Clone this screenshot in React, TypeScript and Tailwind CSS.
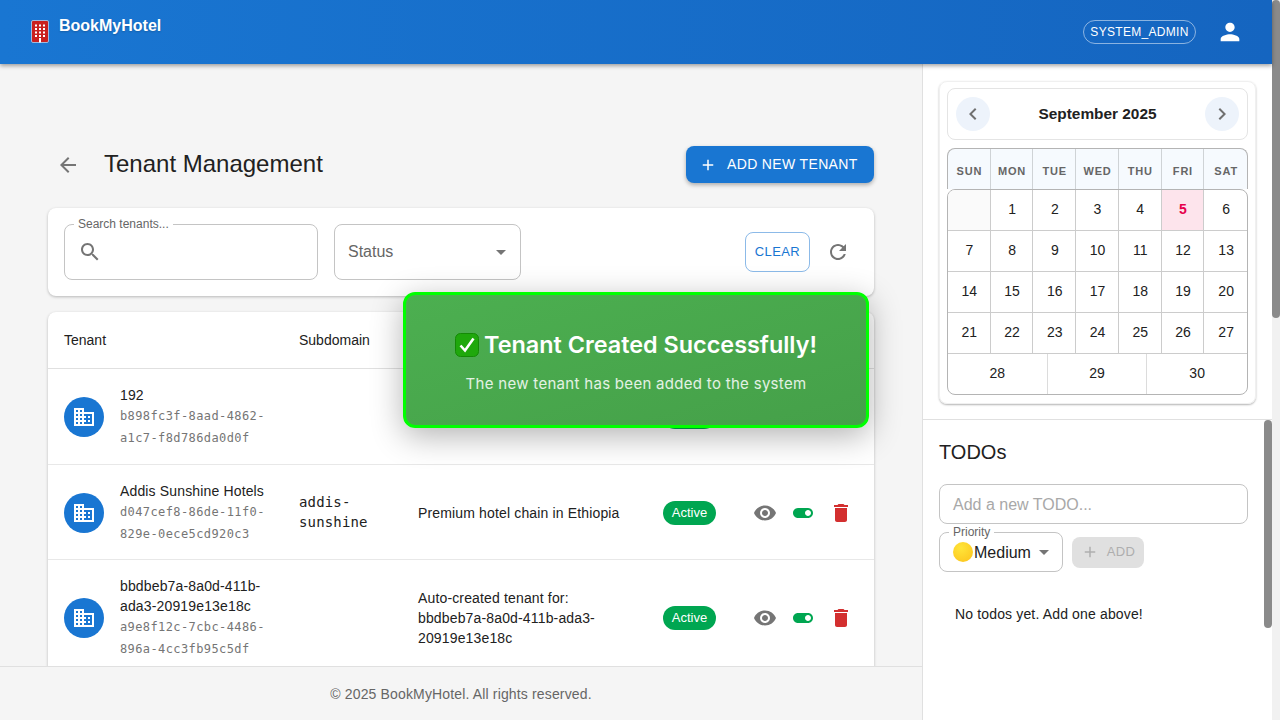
const paths = {
  person: 'M12 12c2.21 0 4-1.79 4-4s-1.79-4-4-4-4 1.79-4 4 1.79 4 4 4zm0 2c-2.67 0-8 1.34-8 4v2h16v-2c0-2.66-5.33-4-8-4z',
  back: 'M20 11H7.83l5.59-5.59L12 4l-8 8 8 8 1.41-1.41L7.83 13H20v-2z',
  add: 'M19 13h-6v6h-2v-6H5v-2h6V5h2v6h6v2z',
  search: 'M15.5 14h-.79l-.28-.27C15.41 12.59 16 11.11 16 9.5 16 5.91 13.09 3 9.5 3S3 5.91 3 9.5 5.91 16 9.5 16c1.61 0 3.09-.59 4.23-1.57l.27.28v.79l5 4.99L20.49 19l-4.99-5zm-6 0C7.01 14 5 11.99 5 9.5S7.01 5 9.5 5 14 7.01 14 9.5 11.99 14 9.5 14z',
  refresh: 'M17.65 6.35C16.2 4.9 14.21 4 12 4c-4.42 0-7.99 3.58-7.99 8s3.57 8 7.99 8c3.73 0 6.84-2.55 7.73-6h-2.08c-.82 2.33-3.04 4-5.65 4-3.31 0-6-2.69-6-6s2.69-6 6-6c1.66 0 3.14.69 4.22 1.78L13 11h7V4l-2.35 2.35z',
  eye: 'M12 4.5C7 4.5 2.73 7.61 1 12c1.73 4.39 6 7.5 11 7.5s9.27-3.11 11-7.5c-1.73-4.39-6-7.5-11-7.5zM12 17c-2.76 0-5-2.24-5-5s2.24-5 5-5 5 2.24 5 5-2.24 5-5 5zm0-8c-1.66 0-3 1.34-3 3s1.34 3 3 3 3-1.34 3-3-1.34-3-3-3z',
  toggle: 'M17 7H7c-2.76 0-5 2.24-5 5s2.24 5 5 5h10c2.76 0 5-2.24 5-5s-2.24-5-5-5zm0 8c-1.66 0-3-1.34-3-3s1.34-3 3-3 3 1.34 3 3-1.34 3-3 3z',
  trash: 'M6 19c0 1.1.9 2 2 2h8c1.1 0 2-.9 2-2V7H6v12zM19 4h-3.5l-1-1h-5l-1 1H5v2h14V4z',
  business: 'M12 7V3H2v18h20V7H12zM6 19H4v-2h2v2zm0-4H4v-2h2v2zm0-4H4V9h2v2zm0-4H4V5h2v2zm4 12H8v-2h2v2zm0-4H8v-2h2v2zm0-4H8V9h2v2zm0-4H8V5h2v2zm10 12h-8v-2h2v-2h-2v-2h2v-2h-2V9h8v10zm-2-8h-2v2h2v-2zm0 4h-2v2h2v-2z',
  left: 'M15.41 7.41 14 6l-6 6 6 6 1.41-1.41L10.83 12z',
  right: 'M10 6 8.59 7.41 13.17 12l-4.58 4.59L10 18l6-6z',
  drop: 'M7 10l5 5 5-5z',
};

function Icon({ name, className = '' }: { name: keyof typeof paths; className?: string }) {
  return (
    <svg viewBox="0 0 24 24" fill="currentColor" className={`shrink-0 ${className}`}>
      <path d={paths[name]} />
    </svg>
  );
}

const tenants = [
  {
    name: '192',
    id: 'b898fc3f-8aad-4862-a1c7-f8d786da0d0f',
    subdomain: '',
    description: '',
  },
  {
    name: 'Addis Sunshine Hotels',
    id: 'd047cef8-86de-11f0-829e-0ece5cd920c3',
    subdomain: 'addis-sunshine',
    description: 'Premium hotel chain in Ethiopia',
  },
  {
    name: 'bbdbeb7a-8a0d-411b-ada3-20919e13e18c',
    id: 'a9e8f12c-7cbc-4486-896a-4cc3fb95c5df',
    subdomain: '',
    description: 'Auto-created tenant for: bbdbeb7a-8a0d-411b-ada3-20919e13e18c',
  },
];

const weekdays = ['SUN', 'MON', 'TUE', 'WED', 'THU', 'FRI', 'SAT'];
const days = ['', ...Array.from({ length: 27 }, (_, i) => String(i + 1))];

function HotelLogo() {
  return (
    <svg viewBox="0 0 18 23" className="h-[23px] w-[18px] shrink-0">
      <rect x="0.5" y="0.5" width="17" height="22" rx="1.5" fill="#c9201f" stroke="#9fb9de" />
      {[4.5, 8, 11.5, 15].map((y) =>
        [4, 8, 12].map((x) => <rect key={`${x}-${y}`} x={x} y={y} width="2" height="2" fill="#fff" />),
      )}
      <rect x="8" y="18" width="2" height="4.5" fill="#fff" />
    </svg>
  );
}

function CheckEmoji() {
  return (
    <svg viewBox="0 0 24 24" className="h-6 w-6 shrink-0">
      <rect x="0.5" y="0.5" width="23" height="23" rx="5" fill="#1fa80c" stroke="#148a06" />
      <path d="M5.5 12.5l4.5 5 8.5-12" fill="none" stroke="#fff" strokeWidth="2.6" />
    </svg>
  );
}

function TenantRow({ tenant }: { tenant: (typeof tenants)[number] }) {
  return (
    <div className="grid grid-cols-[235px_119px_245px_91px_1fr] items-center border-b border-[#e8e8e8] pt-4 pb-[14.5px]">
      <div className="flex items-center gap-4 pl-4">
        <div className="flex h-10 w-10 shrink-0 items-center justify-center rounded-full bg-[#1976d2] text-white">
          <Icon name="business" className="h-6 w-6" />
        </div>
        <div className="w-[148px]">
          <div className="text-sm leading-5 tracking-[0.15px] text-[#212121]">{tenant.name}</div>
          <div className="font-['DejaVu_Sans_Mono',monospace] text-xs leading-[22px] tracking-[0.4px] text-[#757575]">
            {tenant.id}
          </div>
        </div>
      </div>
      <div className="px-4 pb-[2px] font-['DejaVu_Sans_Mono',monospace] text-sm leading-5 tracking-[0.15px] text-[#212121]">
        {tenant.subdomain}
      </div>
      <div className="px-4 text-sm leading-5 tracking-[0.15px] text-[#212121]">{tenant.description}</div>
      <div className="pl-4">
        <span className="flex h-6 w-[53px] items-center justify-center rounded-full bg-[#00a651] text-[13px] text-white">
          Active
        </span>
      </div>
      <div className="flex items-center gap-[14px] pl-[15px]">
        <Icon name="eye" className="h-6 w-6 text-[#757575]" />
        <Icon name="toggle" className="h-6 w-6 text-[#00a651]" />
        <Icon name="trash" className="h-6 w-6 text-[#d32f2f]" />
      </div>
    </div>
  );
}

function Calendar() {
  return (
    <div className="rounded-lg border border-[#f0f0f0] px-[7px] pt-[6px] pb-2 shadow-[0_1px_2px_rgba(0,0,0,0.3)]">
      <div className="flex h-[52px] items-center justify-between rounded-lg border border-[#e4e4e4] px-2">
        <div className="flex h-[34px] w-[34px] items-center justify-center rounded-full bg-[#edf3fb] text-[#707070]">
          <Icon name="left" className="h-6 w-6" />
        </div>
        <span className="text-[15.4px] font-bold text-[#212121]">September 2025</span>
        <div className="flex h-[34px] w-[34px] items-center justify-center rounded-full bg-[#edf3fb] text-[#707070]">
          <Icon name="right" className="h-6 w-6" />
        </div>
      </div>
      <div className="mt-2 w-[301px]">
        <div className="grid h-[41px] grid-cols-7 rounded-t-lg border-x border-t border-[#b4b4b4] bg-[#f6fafe]">
          {weekdays.map((d, i) => (
            <div
              key={d}
              className={`flex items-center justify-center pt-1 pl-px text-[11px] font-bold tracking-[0.8px] text-[#666] ${i < 6 ? 'border-r border-[#cfd3d6]' : ''}`}
            >
              {d}
            </div>
          ))}
        </div>
        <div className="overflow-hidden rounded-lg border border-[#b4b4b4]">
          <div className="grid grid-cols-7">
            {days.map((d, i) => (
              <div
                key={i}
                className={`flex h-[41px] items-center justify-center border-b border-[#cccccc] pb-[2px] pl-px text-sm ${i % 7 < 6 ? 'border-r' : ''} ${
                  d === '5' ? 'bg-[#fde4ec] font-bold text-[#e6004c]' : d === '' ? 'bg-[#fafafa]' : 'text-[#212121]'
                }`}
              >
                {d}
              </div>
            ))}
          </div>
          <div className="grid h-10 grid-cols-3">
            {['28', '29', '30'].map((d, i) => (
              <div
                key={d}
                className={`flex items-center justify-center border-[#dcdcdc] pb-[2px] text-sm text-[#212121] ${i < 2 ? 'border-r' : ''}`}
              >
                {d}
              </div>
            ))}
          </div>
        </div>
      </div>
    </div>
  );
}

function TodoPanel() {
  return (
    <div className="flex min-h-0 flex-1">
      <div className="w-[341px] pt-[19px] pl-4">
        <h2 className="text-xl leading-[26px] text-[#212121]">TODOs</h2>
        <div className="mt-[19px] flex h-10 w-[309px] items-center rounded-lg border border-[#c4c4c4] px-[13px] pt-[1px] text-base text-[#a8a8a8]">
          Add a new TODO...
        </div>
        <div className="mt-2 flex items-center gap-[9px]">
          <div className="relative flex h-10 w-[124px] items-center rounded-lg border border-[#c4c4c4] pl-[13px]">
            <span className="absolute -top-[8px] left-[9px] bg-white px-1 text-xs leading-[14px] text-[#666]">
              Priority
            </span>
            <span className="h-5 w-5 shrink-0 rounded-full bg-[radial-gradient(circle_at_40%_30%,#ffe53a,#fcc21b)]" />
            <span className="ml-[1px] pt-[1px] text-base text-[#212121]">Medium</span>
            <Icon name="drop" className="ml-[1px] h-6 w-6 text-[#757575]" />
          </div>
          <div className="flex h-[31px] w-[72px] items-center justify-center gap-2 rounded-lg bg-[#e0e0e0] text-[13px] tracking-[0.4px] text-[#aeaeae]">
            <Icon name="add" className="h-[18px] w-[18px]" />
            ADD
          </div>
        </div>
        <p className="mt-[32px] pl-4 text-sm leading-5 tracking-[0.15px] text-[#212121]">No todos yet. Add one above!</p>
      </div>
      <div className="w-2">
        <div className="h-[208px] w-2 rounded-full bg-[#8a8a8a]" />
      </div>
    </div>
  );
}

export default function App() {
  return (
    <div className="relative flex h-screen w-full overflow-hidden bg-[#f5f5f5] font-['Liberation_Sans',Arial,sans-serif]">
      <div className="flex w-[1272px] flex-col">
        <header className="relative z-10 flex h-16 shrink-0 items-center justify-between bg-linear-to-r from-[#1976d2] to-[#1565c0] pr-[28px] pl-[31px] shadow-[0_2px_4px_rgba(0,0,0,0.35)]">
          <div className="flex items-start gap-[10px] self-start pt-[17px]">
            <div className="pt-[3px]"><HotelLogo /></div>
            <span className="text-base leading-[18px] font-bold text-white [text-shadow:0_1px_2px_rgba(0,0,0,0.2)]">
              BookMyHotel
            </span>
          </div>
          <div className="flex items-center gap-5">
            <span className="flex h-6 w-[113px] items-center justify-center rounded-full border border-white/50 text-xs tracking-[0.3px] text-white">
              SYSTEM_ADMIN
            </span>
            <Icon name="person" className="h-7 w-7 text-white" />
          </div>
        </header>
        <div className="flex min-h-0 flex-1">
          <main className="flex w-[922px] flex-col">
            <div className="min-h-0 flex-1 overflow-hidden px-12 pt-[82px]">
              <div className="flex h-[37px] items-center justify-between">
                <div className="flex items-center gap-6">
                  <Icon name="back" className="ml-2 h-6 w-6 text-[#757575]" />
                  <h1 className="pb-[2px] text-2xl text-[#212121]">Tenant Management</h1>
                </div>
                <div className="flex h-[37px] w-[188px] items-center gap-2 rounded-lg bg-[#1976d2] pl-[13px] text-sm tracking-[0.35px] text-white shadow-[0_2px_4px_rgba(0,0,0,0.3)]">
                  <Icon name="add" className="h-[18px] w-[18px]" />
                  <span className="ml-[2px] pb-[2px]">ADD NEW TENANT</span>
                </div>
              </div>
              <div className="mt-[25px] flex h-[88px] items-center rounded-lg bg-white px-4 shadow-[0_1px_3px_rgba(0,0,0,0.25)]">
                <div className="relative flex h-14 w-[254px] items-center rounded-lg border border-[#c4c4c4] pl-[13px]">
                  <span className="absolute -top-[8px] left-[9px] bg-white px-1 text-xs leading-[14px] text-[#666]">
                    Search tenants...
                  </span>
                  <Icon name="search" className="h-6 w-6 text-[#757575]" />
                </div>
                <div className="ml-4 flex h-14 w-[187px] items-center justify-between rounded-lg border border-[#c4c4c4] pr-[7px] pl-[13px] text-base text-[#666]">
                  Status
                  <Icon name="drop" className="h-6 w-6 text-[#757575]" />
                </div>
                <div className="ml-auto flex h-10 w-[65px] items-center justify-center rounded-lg border border-[#1976d2]/50 text-[13px] tracking-[0.4px] text-[#1976d2]">
                  CLEAR
                </div>
                <Icon name="refresh" className="mr-2 ml-4 h-6 w-6 text-[#757575]" />
              </div>
              <div className="mt-4 rounded-lg bg-white shadow-[0_1px_3px_rgba(0,0,0,0.25)]">
                <div className="grid h-[57px] grid-cols-[235px_119px_245px_91px_1fr] items-center border-b border-[#e0e0e0] text-sm text-[#212121]">
                  <div className="pl-4">Tenant</div>
                  <div className="pl-4">Subdomain</div>
                </div>
                {tenants.map((t) => (
                  <TenantRow key={t.id} tenant={t} />
                ))}
              </div>
            </div>
            <footer className="flex h-[54px] shrink-0 items-center justify-center border-t border-[#e0e0e0] bg-[#f5f5f5] text-sm tracking-[0.15px] text-[#666]">
              © 2025 BookMyHotel. All rights reserved.
            </footer>
          </main>
          <aside className="flex w-[350px] flex-col border-l border-[#e0e0e0] bg-white">
            <div className="h-[356px] shrink-0 border-b border-[#e0e0e0] pt-[17px] pr-4 pl-4">
              <Calendar />
            </div>
            <TodoPanel />
          </aside>
        </div>
      </div>
      <div className="w-2 bg-[#f1f1f1]">
        <div className="h-[318px] w-2 rounded-full bg-[#8a8a8a]" />
      </div>

      <div className="absolute top-[292px] left-[403px] flex h-[136px] w-[466px] flex-col items-center justify-center rounded-xl border-[3px] border-[#00ff00] bg-linear-to-br from-[#4caf50] to-[#45a049] pt-[3px] font-['Inter',sans-serif] text-white shadow-[0_8px_32px_rgba(0,0,0,0.3)]">
        <div className="flex items-center gap-[5px] text-[23.4px] leading-8 font-semibold">
          <CheckEmoji />
          Tenant Created Successfully!
        </div>
        <p className="mt-[12px] text-[15px] leading-[22px] tracking-[0.3px] text-white/85">The new tenant has been added to the system</p>
      </div>
    </div>
  );
}
